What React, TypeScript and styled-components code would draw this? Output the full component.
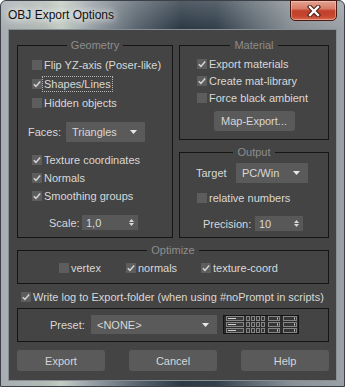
import React from "react";
import styled, { createGlobalStyle } from "styled-components";

const GlobalStyle = createGlobalStyle`
  html, body { margin: 0; padding: 0; }
  body { background: #ffffff; font-family: "Liberation Sans", Arial, sans-serif; }
  * { box-sizing: border-box; }
`;

const Window = styled.div`
  width: 345px;
  height: 387px;
  display: flex;
  flex-direction: column;
  padding: 0 7px 5px 7px;
  border: 1px solid #3b4147;
  border-radius: 6px 6px 0 0;
  background:
    linear-gradient(180deg, rgba(255, 255, 255, 0.18) 0px, rgba(255, 255, 255, 0) 28px),
    linear-gradient(
      90deg,
      #a7adb2 0px,
      #b3bbb5 45px,
      #c3cdc3 60px,
      #a0a8ad 85px,
      #5a6670 135px,
      #2d3a46 180px,
      #33404c 215px,
      #5d6871 250px,
      #889096 290px,
      #9ba1a6 344px
    );
`;

const TitleBar = styled.div`
  height: 28px;
  flex: none;
  display: flex;
  justify-content: space-between;
  align-items: flex-start;
`;

const Title = styled.span`
  align-self: center;
  font-size: 12px;
  line-height: 15px;
  color: #111;
  text-shadow: 0 0 6px rgba(255, 255, 255, 0.9), 0 0 10px rgba(255, 255, 255, 0.8),
    0 0 14px rgba(255, 255, 255, 0.6);
`;

const CloseButton = styled.div`
  width: 47px;
  height: 21px;
  margin-top: -1px;
  border: 1px solid #4d1a12;
  border-radius: 0 0 5px 5px;
  background: linear-gradient(180deg, #e2a391 0%, #d77d68 40%, #c2402a 52%, #c54630 80%, #d86a4c 100%);
  box-shadow: inset 0 0 0 1px rgba(255, 220, 210, 0.45);
  display: flex;
  align-items: center;
  justify-content: center;
`;

const Client = styled.div`
  flex: 1;
  display: flex;
  flex-direction: column;
  background: #444444;
  border: 1px solid #878e94;
  padding: 15px 7px 0 8px;
  color: #d8d8d8;
  font-size: 11px;
`;

const TopRow = styled.div`
  display: flex;
  gap: 6px;
`;

const RightColumn = styled.div`
  width: 150px;
  display: flex;
  flex-direction: column;
  gap: 12px;
`;

const Group = styled.div<{ $w?: number; $h: number; $pt: number; $pl: number; $mt?: number }>`
  position: relative;
  width: ${(p) => (p.$w ? `${p.$w}px` : "100%")};
  height: ${(p) => p.$h}px;
  margin-top: ${(p) => p.$mt ?? 0}px;
  border: 1px solid #151515;
  padding: ${(p) => p.$pt}px 0 0 ${(p) => p.$pl}px;
  display: flex;
  flex-direction: column;
`;

const GroupTitleWrap = styled.div`
  position: absolute;
  top: -8px;
  left: 0;
  right: 0;
  display: flex;
  justify-content: center;
`;

const GroupTitle = styled.span`
  background: #444444;
  color: #8d8d8d;
  padding: 0 4px;
  font-size: 11px;
  line-height: 14px;
`;

const CheckRow = styled.div<{ $h: number; $mt?: number; $ml?: number; $w?: number }>`
  display: flex;
  align-items: center;
  height: ${(p) => p.$h}px;
  margin-top: ${(p) => p.$mt ?? 0}px;
  margin-left: ${(p) => p.$ml ?? 0}px;
  width: ${(p) => (p.$w ? `${p.$w}px` : "auto")};
  flex: none;
`;

const Box = styled.span`
  width: 10px;
  height: 10px;
  flex: none;
  background: #5d5d5d;
  display: flex;
  align-items: center;
  justify-content: center;
`;

const CheckText = styled.span<{ $focus?: boolean }>`
  line-height: 14px;
  padding: 0 1px 0 1px;
  border: 1px dotted ${(p) => (p.$focus ? "#b5b5b5" : "transparent")};
  white-space: nowrap;
`;

const FieldRow = styled.div<{ $h: number; $mt?: number; $ml?: number }>`
  display: flex;
  align-items: center;
  height: ${(p) => p.$h}px;
  margin-top: ${(p) => p.$mt ?? 0}px;
  margin-left: ${(p) => p.$ml ?? 0}px;
  flex: none;
`;

const FieldLabel = styled.span<{ $w: number }>`
  width: ${(p) => p.$w}px;
  flex: none;
  white-space: nowrap;
`;

const Select = styled.div<{ $w: number; $h: number }>`
  width: ${(p) => p.$w}px;
  height: ${(p) => p.$h}px;
  flex: none;
  background: #5a5a5a;
  display: flex;
  align-items: center;
  justify-content: space-between;
  padding: 0 8px 0 6px;
`;

const Spinner = styled.div<{ $w: number }>`
  width: ${(p) => p.$w}px;
  height: 15px;
  flex: none;
  background: #585858;
  display: flex;
  align-items: center;
  justify-content: space-between;
  padding: 0 4px 0 4px;
`;

const SpinArrows = styled.span`
  display: flex;
  flex-direction: column;
  gap: 1px;
`;

const Button = styled.button<{ $w: number; $h: number }>`
  width: ${(p) => p.$w}px;
  height: ${(p) => p.$h}px;
  flex: none;
  border: none;
  border-radius: 3px;
  background: #5a5a5a;
  color: #d6d6d6;
  font-family: "Liberation Sans", Arial, sans-serif;
  font-size: 11px;
  padding: 0;
`;

const CenterRow = styled.div<{ $mt: number }>`
  display: flex;
  justify-content: center;
  margin-top: ${(p) => p.$mt}px;
  padding-right: 17px;
`;

const OptionsRow = styled.div`
  display: flex;
  align-items: center;
`;

const ButtonRow = styled.div`
  display: flex;
  justify-content: space-between;
  margin-top: 8px;
`;

const IconWrap = styled.span`
  display: flex;
  margin-left: 6px;
`;

const CheckMark = () => (
  <svg width="10" height="10" viewBox="0 0 10 10">
    <path d="M1.8 5.3 L3.9 7.4 L8.2 2.4" fill="none" stroke="#d4d4d4" strokeWidth="1.5" />
  </svg>
);

const DownArrow = () => (
  <svg width="7" height="4" viewBox="0 0 7 4">
    <path d="M0 0 H7 L3.5 4 Z" fill="#e8e8e8" />
  </svg>
);

const SmallUp = () => (
  <svg width="5" height="3" viewBox="0 0 5 3">
    <path d="M0 3 H5 L2.5 0 Z" fill="#d8d8d8" />
  </svg>
);

const SmallDown = () => (
  <svg width="5" height="3" viewBox="0 0 5 3">
    <path d="M0 0 H5 L2.5 3 Z" fill="#d8d8d8" />
  </svg>
);

const CloseGlyph = () => (
  <svg width="14" height="12" viewBox="0 0 14 12">
    <path d="M3 2 L11 10 M11 2 L3 10" stroke="#4a1a14" strokeWidth="4.4" strokeLinecap="square" />
    <path d="M3 2 L11 10 M11 2 L3 10" stroke="#ffffff" strokeWidth="2.3" strokeLinecap="square" />
  </svg>
);

const PresetIcon = () => (
  <svg width="76" height="19" viewBox="0 0 76 19">
    <rect x="0.5" y="0.5" width="75" height="18" fill="#2b2b2b" stroke="#141414" />
    {[1, 7, 13].map((y) => (
      <g key={y}>
        <rect x="3.5" y={y + 0.5} width="17" height="4" fill="#3b3b3b" stroke="#858585" />
        <line x1="5" x2="13" y1={y + 2.5} y2={y + 2.5} stroke="#cfcfcf" />
        {[23, 28, 33, 38].map((x) => (
          <rect key={x} x={x + 0.5} y={y + 0.5} width="3" height="4" fill="#333" stroke="#858585" />
        ))}
        <rect x="45.5" y={y + 0.5} width="11" height="4" fill="#353535" stroke="#858585" />
        <rect x="54" y={y + 1.5} width="1" height="2" fill="#cfcfcf" />
        <rect x="60.5" y={y + 0.5} width="13" height="4" fill="#353535" stroke="#858585" />
        <rect x="71" y={y + 1.5} width="1" height="2" fill="#cfcfcf" />
      </g>
    ))}
  </svg>
);

type CheckProps = {
  label: string;
  checked?: boolean;
  focus?: boolean;
  h: number;
  mt?: number;
  ml?: number;
  w?: number;
};

const Check = ({ label, checked, focus, h, mt, ml, w }: CheckProps) => (
  <CheckRow $h={h} $mt={mt} $ml={ml} $w={w}>
    <Box>{checked && <CheckMark />}</Box>
    <CheckText $focus={focus}>{label}</CheckText>
  </CheckRow>
);

const GroupHeader = ({ title }: { title: string }) => (
  <GroupTitleWrap>
    <GroupTitle>{title}</GroupTitle>
  </GroupTitleWrap>
);

export default function App() {
  return (
    <>
      <GlobalStyle />
      <Window>
        <TitleBar>
          <Title>OBJ Export Options</Title>
          <CloseButton>
            <CloseGlyph />
          </CloseButton>
        </TitleBar>
        <Client>
          <TopRow>
            <Group $w={156} $h={193} $pt={9} $pl={14}>
              <GroupHeader title="Geometry" />
              <Check h={19} label="Flip YZ-axis (Poser-like)" />
              <Check h={19} label="Shapes/Lines" checked focus />
              <Check h={19} label="Hidden objects" />
              <FieldRow $h={20} $mt={10} $ml={-4}>
                <FieldLabel $w={38}>Faces:</FieldLabel>
                <Select $w={79} $h={20}>
                  <span>Triangles</span>
                  <DownArrow />
                </Select>
              </FieldRow>
              <Check h={18} mt={9} label="Texture coordinates" checked />
              <Check h={18} label="Normals" checked />
              <Check h={18} label="Smoothing groups" checked />
              <FieldRow $h={15} $mt={10} $ml={17}>
                <FieldLabel $w={33}>Scale:</FieldLabel>
                <Spinner $w={56}>
                  <span>1,0</span>
                  <SpinArrows>
                    <SmallUp />
                    <SmallDown />
                  </SpinArrows>
                </Spinner>
              </FieldRow>
            </Group>
            <RightColumn>
              <Group $h={95} $pt={9} $pl={17}>
                <GroupHeader title="Material" />
                <Check h={17} label="Export materials" checked />
                <Check h={17} label="Create mat-library" checked />
                <Check h={17} label="Force black ambient" />
                <CenterRow $mt={5}>
                  <Button $w={81} $h={20}>Map-Export...</Button>
                </CenterRow>
              </Group>
              <Group $h={86} $pt={10} $pl={16}>
                <GroupHeader title="Output" />
                <FieldRow $h={20}>
                  <FieldLabel $w={40}>Target</FieldLabel>
                  <Select $w={72} $h={20}>
                    <span>PC/Win</span>
                    <DownArrow />
                  </Select>
                </FieldRow>
                <Check h={18} mt={6} ml={1} label="relative numbers" />
                <FieldRow $h={15} $mt={9} $ml={7}>
                  <FieldLabel $w={52}>Precision:</FieldLabel>
                  <Spinner $w={48}>
                    <span>10</span>
                    <SpinArrows>
                      <SmallUp />
                      <SmallDown />
                    </SpinArrows>
                  </Spinner>
                </FieldRow>
              </Group>
            </RightColumn>
          </TopRow>
          <Group $h={34} $mt={12} $pt={8} $pl={41}>
            <GroupHeader title="Optimize" />
            <OptionsRow>
              <Check h={18} w={67} label="vertex" />
              <Check h={18} w={75} label="normals" checked />
              <Check h={18} label="texture-coord" checked />
            </OptionsRow>
          </Group>
          <Check h={18} mt={4} ml={4} label="Write log to Export-folder (when using #noPrompt in scripts)" checked />
          <Group $h={34} $mt={2} $pt={6} $pl={32}>
            <FieldRow $h={19}>
              <FieldLabel $w={41}>Preset:</FieldLabel>
              <Select $w={126} $h={19}>
                <span>&lt;NONE&gt;</span>
                <DownArrow />
              </Select>
              <IconWrap>
                <PresetIcon />
              </IconWrap>
            </FieldRow>
          </Group>
          <ButtonRow>
            <Button $w={88} $h={21}>Export</Button>
            <Button $w={88} $h={21}>Cancel</Button>
            <Button $w={88} $h={21}>Help</Button>
          </ButtonRow>
        </Client>
      </Window>
    </>
  );
}
